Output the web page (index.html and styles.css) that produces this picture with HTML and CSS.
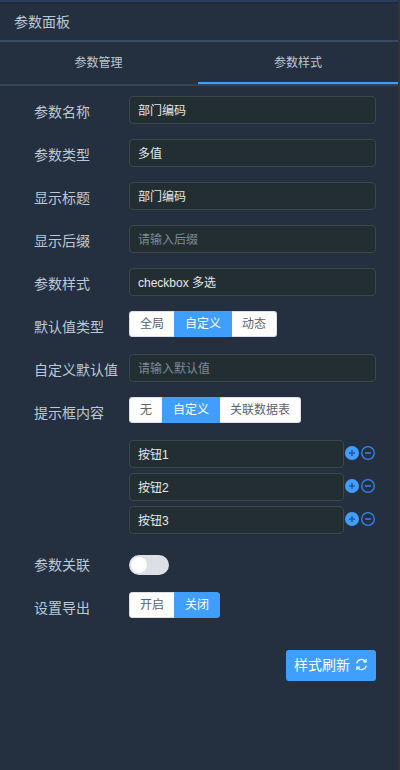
FILE: index.html
```html
<!DOCTYPE html>
<html lang="zh-CN">
  <head>
    <title>参数面板</title>
    <meta charset="UTF-8">
    <link rel="stylesheet" href="styles.css">
  </head>
  <body>
    <!-- icon shapes used by the option list -->
    <svg class="sprite">
      <symbol id="icon-plus" viewBox="0 0 14 14">
        <circle cx="7" cy="7" r="7" fill="#409eff"/>
        <path d="M4 7h6M7 4v6" stroke="#2456a6" stroke-width="1.6"/>
      </symbol>
      <symbol id="icon-minus" viewBox="0 0 14 14">
        <circle cx="7" cy="7" r="6.3" fill="none" stroke="#3586f0" stroke-width="1.3"/>
        <path d="M4 7h6" stroke="#3586f0" stroke-width="1.5"/>
      </symbol>
    </svg>

    <main class="panel">
      <header class="panel-title">参数面板</header>

      <nav class="tabs">
        <a class="tab">参数管理</a>
        <a class="tab active">参数样式</a>
      </nav>

      <form class="params">
        <div class="row">
          <label>参数名称</label>
          <input type="text" value="部门编码">
        </div>
        <div class="row">
          <label>参数类型</label>
          <input type="text" value="多值">
        </div>
        <div class="row">
          <label>显示标题</label>
          <input type="text" value="部门编码">
        </div>
        <div class="row">
          <label>显示后缀</label>
          <input type="text" placeholder="请输入后缀">
        </div>
        <div class="row">
          <label>参数样式</label>
          <input type="text" value="checkbox 多选">
        </div>
        <div class="row">
          <label>默认值类型</label>
          <div class="radio-group">
            <span>全局</span>
            <span class="checked">自定义</span>
            <span>动态</span>
          </div>
        </div>
        <div class="row">
          <label>自定义默认值</label>
          <input type="text" placeholder="请输入默认值">
        </div>
        <div class="row">
          <label>提示框内容</label>
          <div class="radio-group">
            <span>无</span>
            <span class="checked">自定义</span>
            <span>关联数据表</span>
          </div>
        </div>

        <div class="options">
          <div class="option">
            <input type="text" value="按钮1">
            <svg class="icon"><use href="#icon-plus"/></svg>
            <svg class="icon"><use href="#icon-minus"/></svg>
          </div>
          <div class="option">
            <input type="text" value="按钮2">
            <svg class="icon"><use href="#icon-plus"/></svg>
            <svg class="icon"><use href="#icon-minus"/></svg>
          </div>
          <div class="option">
            <input type="text" value="按钮3">
            <svg class="icon"><use href="#icon-plus"/></svg>
            <svg class="icon"><use href="#icon-minus"/></svg>
          </div>
        </div>

        <div class="row">
          <label>参数关联</label>
          <div class="switch"></div>
        </div>
        <div class="row">
          <label>设置导出</label>
          <div class="radio-group">
            <span>开启</span>
            <span class="checked">关闭</span>
          </div>
        </div>

        <div class="buttons">
          <button type="button">
            样式刷新
            <svg class="refresh" viewBox="0 0 14 14">
              <path d="M12.2 8.2A5.3 5.3 0 0 1 3 10.6M1.8 5.8A5.3 5.3 0 0 1 11 3.4"/>
              <path d="M2 13V9.8h3.2M12 1v3.2H8.8"/>
            </svg>
          </button>
        </div>
      </form>
    </main>
  </body>
</html>
```
FILE: styles.css
```css
/* General styles */

* {
  box-sizing: border-box;
}

body {
  margin: 0;
  background-color: #333435;
  color: #bcc9d4;
  font-family: "Liberation Sans", "Noto Sans CJK SC", sans-serif;
  font-size: 14px;
}

.sprite {
  display: none;
}

.panel {
  width: 398px;
  height: 770px;
  border-top: 2px solid #2b3d5c;
  background: linear-gradient(#1f2836, #242f3f 3px);
}

.panel-title {
  height: 40px;
  padding-left: 14px;
  border-bottom: 2px solid #3b4b65;
  line-height: 40px;
}

/* Tabs */

.tabs {
  display: flex;
  height: 44px;
  border-bottom: 2px solid #344357;
}

.tab {
  width: 50%;
  height: 42px;
  margin-left: -1px;
  font-size: 12px;
  line-height: 43px;
  text-align: center;
}

.tab:first-child {
  margin-left: 0;
  padding-right: 2px;
}

.tab.active {
  flex: 1;
  border-bottom: 2px solid #409eff;
}

/* Form rows */

.params {
  padding: 10px 22px 0 34px;
}

.row {
  display: flex;
  align-items: flex-start;
  height: 28px;
  margin-bottom: 15px;
}

.row label {
  flex: none;
  width: 95px;
  line-height: 32px;
  white-space: nowrap;
}

input {
  flex: 1;
  min-width: 0;
  height: 28px;
  padding: 0 8px 2px;
  border: 1px solid #3a474c;
  border-radius: 4px;
  outline: none;
  background-color: #222e32;
  color: #e4e8ea;
  font-family: inherit;
  font-size: 12px;
}

input:placeholder-shown {
  padding: 2px 8px 0;
}

input::placeholder {
  color: #7c8b94;
  opacity: 1;
}

/* Segmented radio buttons */

.radio-group {
  display: flex;
}

.radio-group span {
  height: 26px;
  margin-left: -1px;
  padding: 0 10px;
  border: 1px solid #dcdfe6;
  border-left-color: transparent;
  background-color: #fff;
  color: #606266;
  font-size: 12px;
  line-height: 25px;
}

.radio-group span:first-child {
  margin-left: 0;
  border-left-color: #dcdfe6;
  border-radius: 3px 0 0 3px;
}

.radio-group span:last-child {
  border-radius: 0 3px 3px 0;
}

.radio-group .checked {
  z-index: 1;
  border-color: #409eff;
  background-color: #409eff;
  color: #fff;
}

/* Option list */

.options {
  display: grid;
  gap: 5px;
  margin: 0 0 15px 95px;
}

.option {
  display: flex;
  align-items: flex-start;
}

.option input {
  flex: none;
  width: 215px;
}

.icon {
  flex: none;
  width: 14px;
  height: 14px;
  margin: 6px 1px 0;
}

/* Switch */

.switch {
  width: 40px;
  height: 20px;
  margin-top: 6px;
  padding: 2px;
  border-radius: 10px;
  background-color: #dcdfe6;
}

.switch::before {
  content: "";
  display: block;
  width: 16px;
  height: 16px;
  border-radius: 50%;
  background-color: #fff;
}

.buttons {
  display: flex;
  justify-content: flex-end;
  padding-top: 15px;
}

button {
  display: flex;
  align-items: center;
  gap: 5px;
  width: 90px;
  height: 31px;
  padding: 0 8px 3px;
  border: 0;
  border-radius: 3px;
  background-color: #409eff;
  color: #fff;
  font-family: inherit;
  font-size: 14px;
  white-space: nowrap;
}

.refresh {
  flex: none;
  width: 13px;
  height: 13px;
  fill: none;
  stroke: #fff;
  stroke-width: 1.2;
}
```
